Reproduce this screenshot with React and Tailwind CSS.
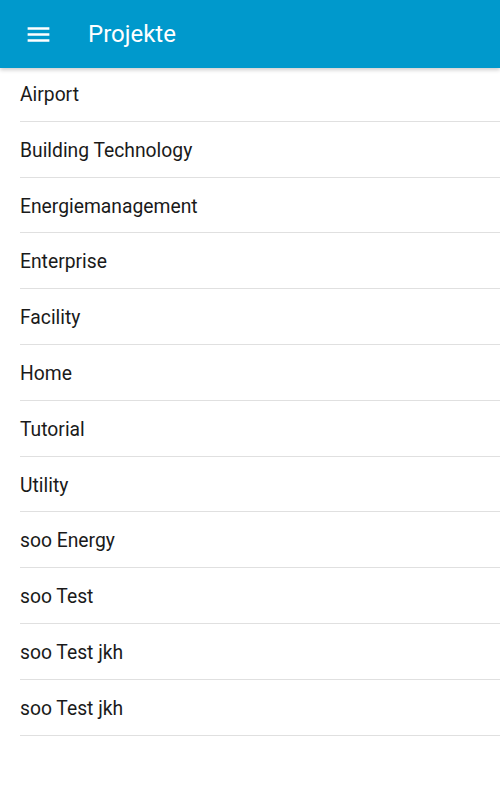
const projects = [
  'Airport',
  'Building Technology',
  'Energiemanagement',
  'Enterprise',
  'Facility',
  'Home',
  'Tutorial',
  'Utility',
  'soo Energy',
  'soo Test',
  'soo Test jkh',
  'soo Test jkh',
];

export default function App() {
  return (
    <div className="min-h-[800px] bg-white font-['Roboto',sans-serif]">
      {/* Toolbar */}
      <header className="relative z-10 flex h-[68px] items-center bg-[#0099cc] shadow-[0_2px_4px_rgba(0,0,0,0.2)]">
        <button className="ml-[24px] flex h-[29px] w-[29px] items-center justify-center text-white">
          <svg viewBox="0 0 24 24" width="29" height="29" fill="currentColor">
            <path d="M3 18h18v-2H3v2zm0-5h18v-2H3v2zm0-7v2h18V6H3z" />
          </svg>
        </button>
        <h1 className="ml-[35px] text-[24px] leading-none text-white">Projekte</h1>
      </header>

      {/* Project list */}
      <ul className="-mt-[2px] pl-5">
        {projects.map((name, i) => (
          <li
            key={i}
            className="flex h-[55.8px] items-center border-b border-[#e0e0e0] pt-[4px] text-[19.3px] text-[#1a1a1a]"
          >
            {name}
          </li>
        ))}
      </ul>
    </div>
  );
}
